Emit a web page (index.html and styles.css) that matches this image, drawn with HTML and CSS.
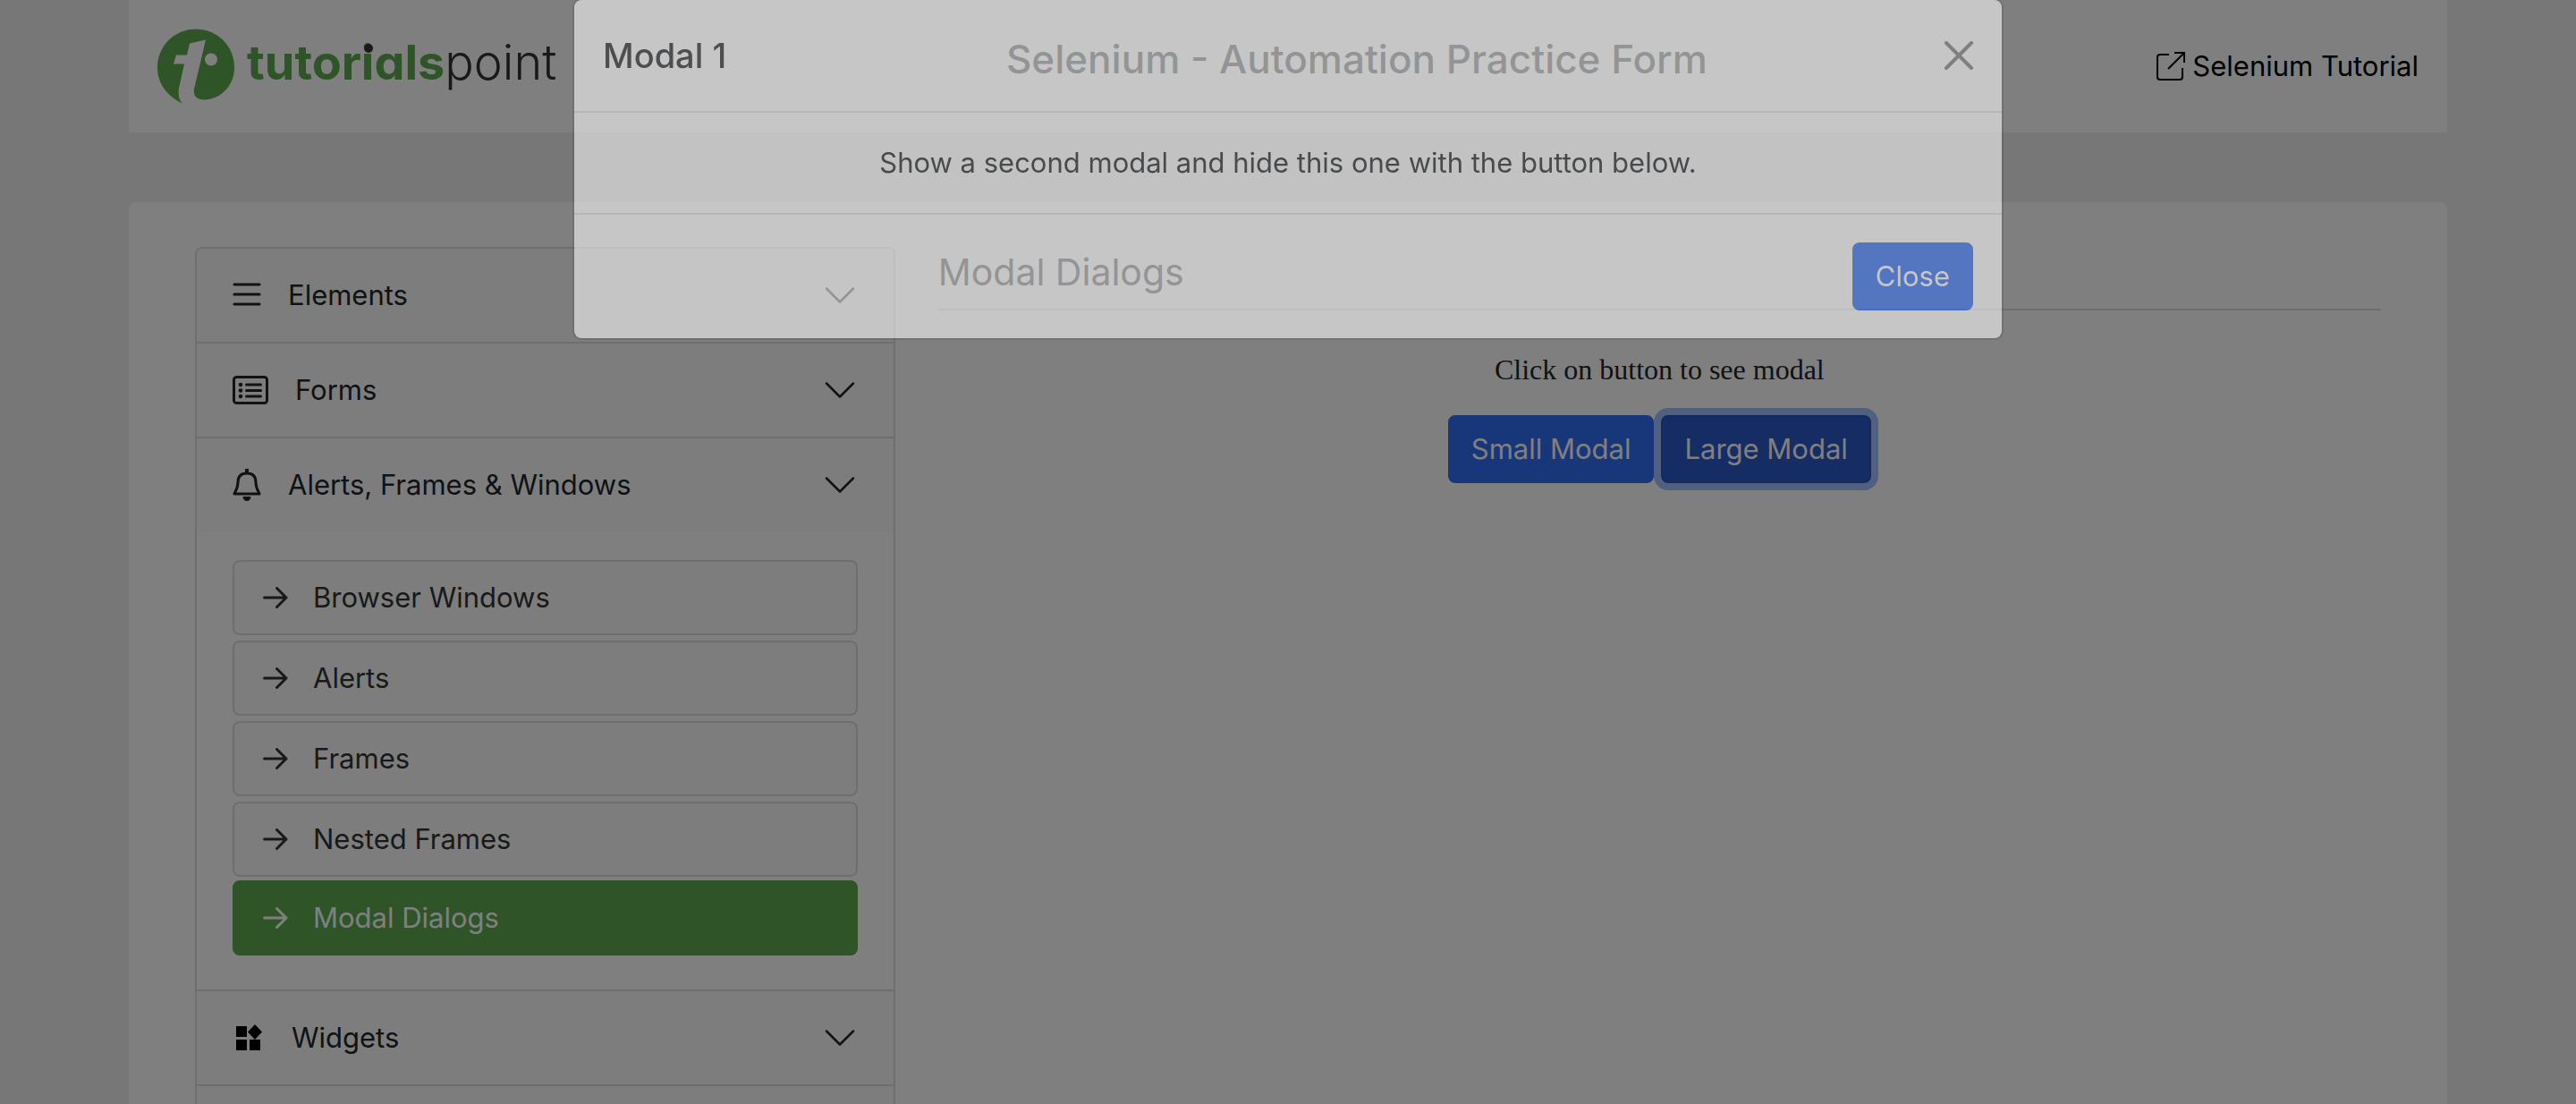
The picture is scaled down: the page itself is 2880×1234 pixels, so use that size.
FILE: index.html
```html
<!DOCTYPE html>
<html lang="en">
<head>
<meta charset="utf-8">
<title>Selenium - Automation Practice Form</title>
<link rel="stylesheet" href="styles.css">
</head>
<body>
<svg class="defs" aria-hidden="true">
  <symbol id="chevron" viewBox="0 0 16 16"><path d="M2 5l6 6 6-6" fill="none" stroke="currentColor" stroke-linecap="round" stroke-linejoin="round"/></symbol>
  <symbol id="arrow" viewBox="0 0 28 24"><path d="M1.500 12H26M15.500 1.500L26 12L15.500 22.500" fill="none" stroke="currentColor" stroke-width="3" stroke-linecap="round" stroke-linejoin="round"/></symbol>
</svg>

<header class="header">
  <a class="logo" href="#" aria-label="tutorialspoint">
    <svg class="logo-mark" viewBox="0 0 86 83" aria-hidden="true">
      <path fill="#5ca850" d="M28 83C11 75 0 61 0 43C0 19 19 0 43 0S86 19 86 43C86 63 71 79 52 79C44 79 40 75 41 67L54 12L36 16L33 29L21 29L18 39L30 39L24 66C23 74 24 79 28 83Z"/>
      <circle cx="60" cy="34" r="7" fill="#fff"/>
    </svg>
    <span class="logo-text"><b>tutor<span class="dot">i</span>als</b>point</span>
  </a>
  <h1 class="title">Selenium - Automation Practice Form</h1>
  <a class="tutorial" href="#">
    <svg class="icon-32" viewBox="0 0 32 32" fill="none" stroke="currentColor" stroke-width="2" aria-hidden="true"><path d="M14 3H4Q1 3 1 6V28Q1 31 4 31H26Q29 31 29 28V18M20 1H31V12M31 1L13 19"/></svg>
    Selenium Tutorial
  </a>
</header>

<main class="main">
  <nav class="col-side">
    <div class="accordion">
      <button class="acc-button" type="button">
        <svg class="icon-32" viewBox="0 0 32 32" fill="none" stroke="currentColor" stroke-width="3" stroke-linecap="round" aria-hidden="true"><path d="M2 4H30M2 15H30M2 26H30"/></svg>
        <span>Elements</span><svg class="chevron" aria-hidden="true"><use href="#chevron"/></svg>
      </button>
      <button class="acc-button" type="button">
        <svg class="icon-40" viewBox="0 0 40 32" fill="none" stroke="currentColor" stroke-width="3" stroke-linecap="round" aria-hidden="true"><rect x="1.500" y="1.500" width="37" height="29" rx="3"/><path d="M15.500 10H31.500M15.500 16.500H31.500M15.500 23H31.500"/><g fill="currentColor" stroke="none"><circle cx="9" cy="10" r="2.300"/><circle cx="9" cy="16.500" r="2.300"/><circle cx="9" cy="23" r="2.300"/></g></svg>
        <span>Forms</span><svg class="chevron" aria-hidden="true"><use href="#chevron"/></svg>
      </button>
      <button class="acc-button" type="button" aria-expanded="true">
        <svg class="icon-bell" viewBox="0 0 32 36" aria-hidden="true"><path d="M16 5C9 5 6 9 6 15C6 21 4 24 2 28H30C28 24 26 21 26 15C26 9 23 5 16 5Z" fill="none" stroke="currentColor" stroke-width="3" stroke-linejoin="round"/><path d="M14 0H18V5H14ZM11.500 31H20.500Q20 36 16 36T11.500 31Z" fill="currentColor"/></svg>
        <span>Alerts, Frames &amp; Windows</span><svg class="chevron" aria-hidden="true"><use href="#chevron"/></svg>
      </button>
      <ul class="acc-body">
        <li><a class="item" href="#"><svg class="arrow" aria-hidden="true"><use href="#arrow"/></svg>Browser Windows</a></li>
        <li><a class="item" href="#"><svg class="arrow" aria-hidden="true"><use href="#arrow"/></svg>Alerts</a></li>
        <li><a class="item" href="#"><svg class="arrow" aria-hidden="true"><use href="#arrow"/></svg>Frames</a></li>
        <li><a class="item" href="#"><svg class="arrow" aria-hidden="true"><use href="#arrow"/></svg>Nested Frames</a></li>
        <li class="current"><a class="item active" href="#"><svg class="arrow" aria-hidden="true"><use href="#arrow"/></svg>Modal Dialogs</a></li>
      </ul>
      <button class="acc-button" type="button">
        <svg class="icon-36" viewBox="0 0 36 32" fill="#000" aria-hidden="true"><path d="M4 3H16V15H4ZM4 18H16V30H4ZM19 18H31V30H19ZM25 1L33 9.500L25 18L17 9.500Z"/></svg>
        <span>Widgets</span><svg class="chevron" aria-hidden="true"><use href="#chevron"/></svg>
      </button>
      <div class="acc-rest"></div>
    </div>
  </nav>
  <section class="col-main">
    <h2 class="section-title">Modal Dialogs</h2>
    <div class="demo">
      <p class="hint">Click on button to see modal</p>
      <div class="actions">
        <button class="btn" type="button">Small Modal</button>
        <button class="btn pressed" type="button">Large Modal</button>
      </div>
    </div>
  </section>
</main>

<div class="backdrop"></div>
<div class="modal" role="dialog" aria-labelledby="modal-title">
  <div class="modal-header">
    <h3 class="modal-title" id="modal-title">Modal 1</h3>
    <button class="close" type="button" aria-label="Close dialog"><svg class="icon-32" viewBox="0 0 32 32" aria-hidden="true"><path d="M2 2L30 30M30 2L2 30" stroke="#000" stroke-width="4" stroke-linecap="round"/></svg></button>
  </div>
  <div class="modal-body">Show a second modal and hide this one with the button below.</div>
  <div class="modal-footer"><button class="btn" type="button">Close</button></div>
</div>
</body>
</html>
```
FILE: styles.css
```css
* { box-sizing: border-box; }

body {
  margin: 0;
  height: 100vh;
  overflow: hidden;
  display: flex;
  flex-direction: column;
  align-items: center;
  gap: 78px;
  background: #eee;
  color: #212529;
  font: 400 31px/48px Inter, sans-serif;
}

h1, h2, h3, p, ul { margin: 0; padding: 0; }
a { color: inherit; text-decoration: none; }
button { font: inherit; color: inherit; cursor: pointer; }
svg { flex: none; display: block; }

.defs { position: absolute; width: 0; height: 0; }
.icon-32 { width: 32px; height: 32px; }
.icon-36 { width: 36px; height: 32px; }
.icon-40 { width: 40px; height: 32px; }
.icon-bell { width: 32px; height: 36px; }

/* Header */
.header {
  flex: none;
  width: 90%;
  padding: 32px;
  display: flex;
  justify-content: space-between;
  align-items: center;
  background: #fff;
}
.logo { display: flex; align-items: center; gap: 14px; }
.logo-mark { width: 86px; height: 84px; }
.logo-text {
  padding-bottom: 8px;
  color: #333;
  font-size: 54px;
  font-weight: 300;
  line-height: 60px;
  font-feature-settings: "cv11";
}
.logo-text b { color: #5ca850; font-weight: 700; }
.dot { position: relative; }
.dot::before {
  content: "";
  position: absolute;
  top: 12px;
  left: 3px;
  width: 10px;
  height: 10px;
  border-radius: 50%;
  background: #333;
}
.title {
  padding-bottom: 16px;
  font-size: 44px;
  font-weight: 500;
  line-height: 56px;
}
.tutorial { display: flex; align-items: center; gap: 8px; color: #000; }

/* Page */
.main {
  flex: 1;
  width: 90%;
  padding: 50px 50px 0;
  display: flex;
  border-radius: 8px 8px 0 0;
  background: #fff;
}
.col-side { width: 33.3333%; padding: 0 24px; }
.col-main { flex: 1; padding: 0 24px; }

/* Accordion */
.accordion {
  height: 100%;
  display: flex;
  flex-direction: column;
  border: 2px solid #ddd;
  border-bottom: 0;
  border-radius: 8px 8px 0 0;
  overflow: hidden;
}
.acc-button {
  flex: none;
  width: 100%;
  padding: 28px 40px;
  display: flex;
  align-items: center;
  gap: 30px;
  border: 0;
  background: #fbfbfb;
  text-align: left;
}
.acc-button + .acc-button,
.acc-body + .acc-button { border-top: 2px solid #ddd; }
.chevron { width: 40px; height: 40px; margin-left: auto; }
.acc-body {
  flex: none;
  padding: 32px 40px;
  list-style: none;
  color: #333;
}
.acc-body li { margin-bottom: 6px; }
.acc-body .current { margin-top: -2px; }
.item {
  padding: 16px 32px;
  display: flex;
  align-items: center;
  gap: 28px;
  border: 2px solid #ddd;
  border-radius: 8px;
  background: #fbfbfb;
}
.item.active { border-color: #5ca850; background: #5ca850; color: #fff; }
.arrow { width: 28px; height: 24px; }
.acc-rest { flex: 1; border-top: 2px solid #ddd; background: #fbfbfb; }

/* Content */
.section-title {
  padding-bottom: 13px;
  border-bottom: 2px solid #ddd;
  font-size: 41px;
  font-weight: 400;
  line-height: 56px;
}
.demo { padding-top: 42px; text-align: center; }
.hint { padding-bottom: 27px; font: 32px/48px "Liberation Serif", serif; }
.actions { display: flex; justify-content: center; gap: 8px; }

.btn {
  padding: 12px 24px;
  border: 2px solid #316df4;
  border-radius: 8px;
  background: #316df4;
  color: #fff;
}
.btn.pressed {
  border-color: #2952bf;
  background: #2a58cb;
  box-shadow: 0 0 0 8px #a0c1fc;
}

/* Dialog */
.backdrop { position: fixed; inset: 0; background: rgba(0, 0, 0, .5); }
.modal {
  position: fixed;
  top: -2px;
  left: 50%;
  width: 1600px;
  max-width: 100%;
  transform: translateX(-50%);
  border: 2px solid rgba(0, 0, 0, .2);
  border-radius: 10px;
  background: #fff;
  background-clip: padding-box;
  opacity: .55;
}
.modal-header {
  padding: 32px;
  display: flex;
  justify-content: space-between;
  align-items: center;
  border-bottom: 2px solid #dee2e6;
}
.modal-title { font-size: 38px; font-weight: 500; line-height: 60px; }
.close { padding: 0; border: 0; background: none; opacity: .5; }
.modal-body { padding: 32px; text-align: center; }
.modal-footer {
  padding: 31px 32px;
  display: flex;
  justify-content: flex-end;
  border-top: 2px solid #dee2e6;
}
```
